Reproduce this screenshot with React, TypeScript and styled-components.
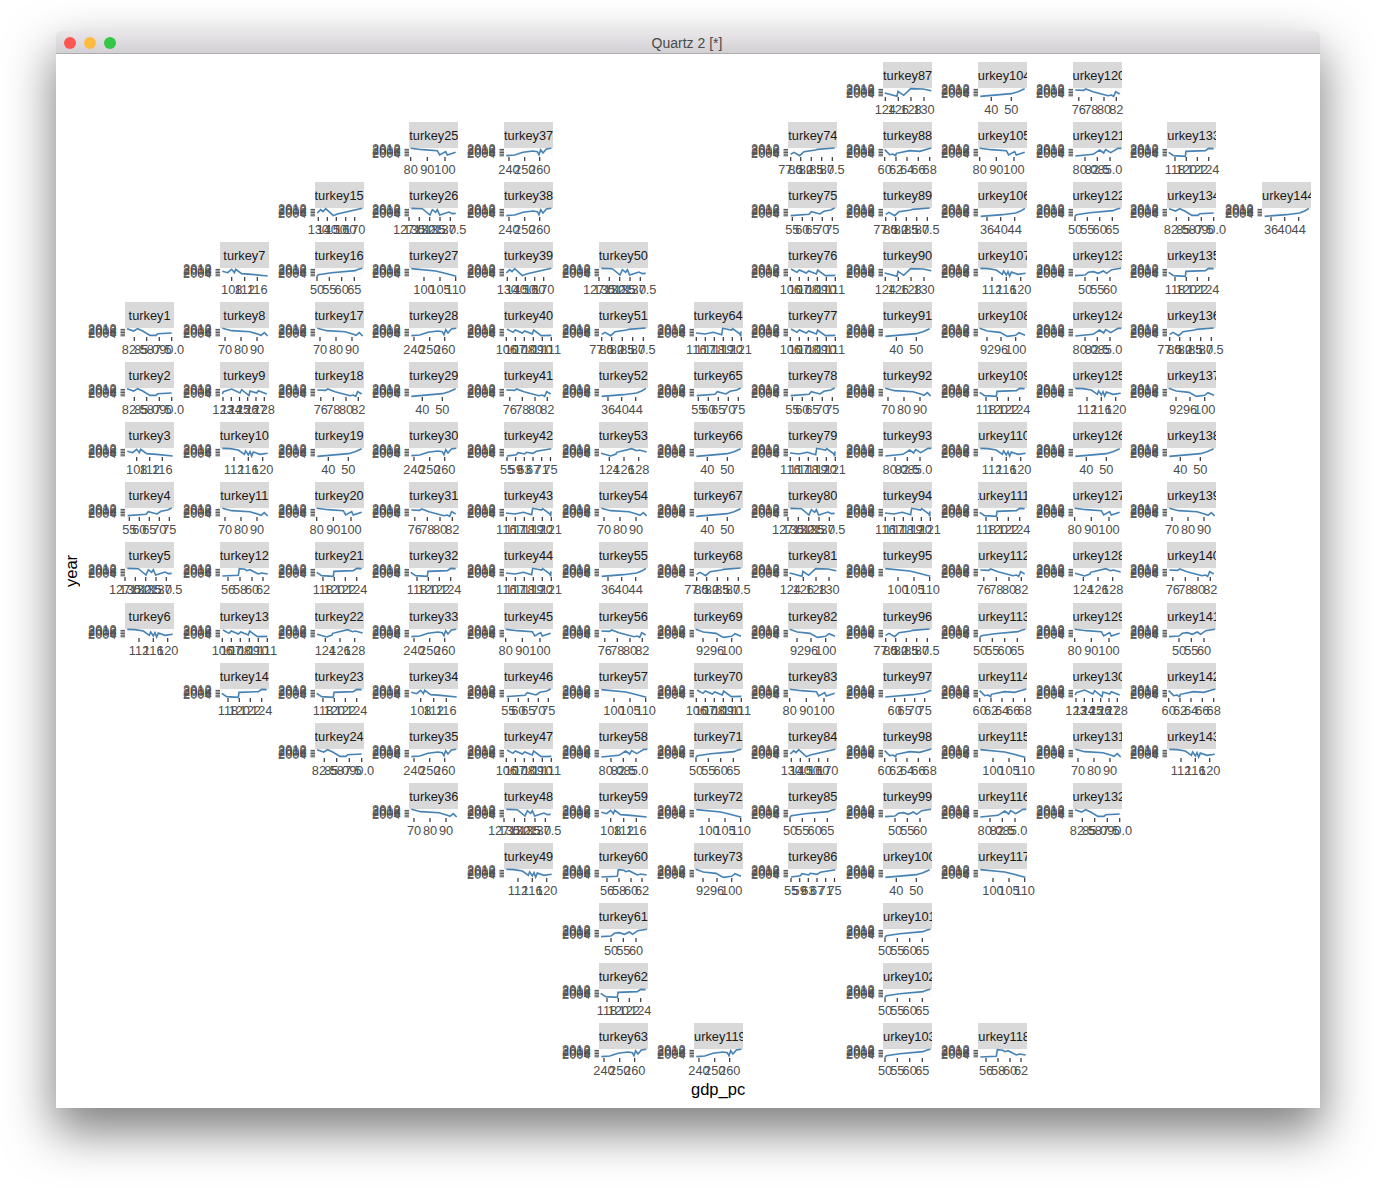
import React from "react";
import styled, { createGlobalStyle } from "styled-components";

const Global = createGlobalStyle`
  html, body { margin: 0; padding: 0; background: #fff; }
  body { width: 1376px; height: 1188px; overflow: hidden; font-family: "Liberation Sans", Arial, sans-serif; }
`;

const Page = styled.div`
  width: 1376px;
  height: 1188px;
  padding: 31px 56px 80px;
  box-sizing: border-box;
`;
const Window = styled.div`
  width: 1264px;
  height: 1077px;
  display: flex;
  flex-direction: column;
  background: #fff;
  border-radius: 5px 5px 0 0;
  box-shadow: 0 22px 48px 2px rgba(0, 0, 0, 0.5);
`;
const TitleBar = styled.div`
  height: 23px;
  box-sizing: border-box;
  display: flex;
  align-items: center;
  padding: 1px 0 0 8px;
  position: relative;
  gap: 8px;
  background: linear-gradient(#e9e7e9, #d2d0d2);
  border-bottom: 1px solid #aeacae;
  border-radius: 5px 5px 0 0;
  flex: none;
`;
const Light = styled.span<{ $c: string }>`
  width: 12px;
  height: 12px;
  border-radius: 50%;
  background: ${(p) => p.$c};
  flex: none;
`;
const WindowTitle = styled.span`
  position: absolute;
  left: 0;
  right: 2px;
  text-align: center;
  font-size: 14px;
  color: #4a4a4a;
`;
const Canvas = styled.div`
  display: flex;
  align-items: flex-start;
  padding-top: 8.12px;
  flex: 1;
`;
const YTitle = styled.div`
  writing-mode: vertical-rl;
  transform: rotate(180deg);
  font-size: 16.5px;
  line-height: 17px;
  color: #000;
  width: 17px;
  margin-left: 7px;
  height: 1017px;
  text-align: center;
`;
const PlotColumn = styled.div`
  margin-left: 45.1px;
  display: flex;
  flex-direction: column;
`;
const FacetGrid = styled.div`
  display: grid;
  grid-template-columns: repeat(13, 94.75px);
  grid-template-rows: repeat(16, 60.06px) 56.88px;
`;
const XTitle = styled.div`
  font-size: 16.5px;
  line-height: 19px;
  color: #000;
  text-align: center;
  width: 1186px;
`;
const Facet = styled.div<{ $col: number; $row: number }>`
  grid-column: ${(p) => p.$col + 1};
  grid-row: ${(p) => p.$row + 1};
  width: 49px;
`;
const Strip = styled.div`
  height: 26px;
  box-sizing: border-box;
  background: #d9d9d9;
  color: #1a1a1a;
  font-size: 12.8px;
  display: flex;
  align-items: center;
  justify-content: center;
  overflow: hidden;
  white-space: nowrap;
  padding-top: 1px;
`;
const Chart = styled.svg`
  display: block;
  overflow: visible;
`;
const AxisText = styled.text`
  font-family: "Liberation Sans", Arial, sans-serif;
  font-size: 12.8px;
  fill: #4d4d4d;
`;
const YearText = styled(AxisText)`
  fill-opacity: 0.85;
`;

type Kind = { t: [number, string][]; l: string };
const K: Record<string, Kind> = {
  k82: { t: [[9.3, "82.5"], [21.7, "85.0"], [34.3, "87.5"], [46.7, "90.0"]], l: "6,2 26,9 38,2 53,9 75,22 93,22 98,17 140,15" },
  k108: { t: [[11.7, "108"], [24.7, "112"], [37.3, "116"]], l: "7,10 23,14 35,4 43,14 47,4 65,17 95,19 143,24" },
  k50: { t: [[2, "50"], [14.3, "55"], [26.7, "60"], [39.3, "65"]], l: "5,26 10,20 50,14 120,8 130,4 142,1" },
  k70: { t: [[5, "70"], [21, "80"], [37, "90"]], l: "7,1 35,8 90,11 115,19 123,22 133,14 143,24" },
  k123: { t: [[3, "123"], [11.3, "124"], [19.5, "125"], [27.7, "126"], [36, "127"], [44.3, "128"]], l: "7,18 10,11 35,3 60,15 65,5 87,23 90,9 110,15 115,8 140,18" },
  k76: { t: [[5.8, "76"], [18.3, "78"], [31, "80"], [43.3, "82"]], l: "7,6 32,7 38,3 60,11 105,23 115,21 122,25 128,11 140,18" },
  k112: { t: [[14, "112"], [28.3, "116"], [42.7, "120"]], l: "7,1 30,2 55,6 73,19 77,9 85,21 90,11 95,24 100,12 120,19 143,16" },
  k40: { t: [[13.3, "40"], [33.3, "50"]], l: "7,25 100,17 120,11 140,2" },
  k55: { t: [[4.3, "55"], [14.3, "60"], [24.3, "65"], [34.3, "70"], [44.3, "75"]], l: "8,23 63,19 70,11 96,18 108,10 128,6 140,0" },
  k80: { t: [[1.7, "80"], [18.3, "90"], [36, "100"]], l: "5,1 40,5 85,8 92,21 110,11 115,21 140,13" },
  k127: { t: [[0, "127.5"], [10.3, "130.0"], [20.7, "132.5"], [31, "135.0"], [41.3, "137.5"]], l: "7,1 40,2 63,21 70,5 80,13 85,5 92,21 120,12 130,17 140,16" },
  k56: { t: [[8, "56"], [20, "58"], [32, "60"], [43, "62"]], l: "7,24 55,22 58,2 75,4 80,8 90,5 115,18 125,15 143,18" },
  k118: { t: [[8, "118"], [19.3, "120"], [30.3, "122"], [41.7, "124"]], l: "5,13 20,23 55,25 57,10 115,8 125,1 140,2" },
  k124: { t: [[10.3, "124"], [25, "126"], [39.7, "128"]], l: "6,16 35,24 51,18 53,13 98,2 113,8 121,6 143,12" },
  k240: { t: [[5, "240"], [20.7, "250"], [35.7, "260"]], l: "7,23 32,21 57,13 87,9 100,11 105,20 110,5 117,15 127,3 142,1" },
  k100: { t: [[15, "100"], [31, "105"], [46.7, "110"]], l: "7,2 80,9 105,15 142,25" },
  k130: { t: [[3.3, "130"], [12.3, "140"], [21.3, "150"], [30.7, "160"], [39.7, "170"]], l: "7,15 17,5 24,11 32,2 55,23 67,18 142,1" },
  k77: { t: [[2.7, "77.5"], [12.7, "80.0"], [23.3, "82.5"], [33.7, "85.0"], [44.3, "87.5"]], l: "8,19 18,13 35,23 48,11 83,6 88,4 140,0" },
  k106: { t: [[2.3, "106"], [11.3, "107"], [20.3, "108"], [29.3, "109"], [38.3, "110"], [47.3, "111"]], l: "9,3 27,13 34,6 55,15 62,9 85,18 89,6 112,23 142,22" },
  k116: { t: [[2.3, "116"], [11.3, "117"], [20.3, "118"], [29.3, "119"], [38.3, "120"], [47.3, "121"]], l: "6,15 33,18 58,13 83,20 86,1 113,6 116,2 138,18 140,25 141,10" },
  k36: { t: [[9, "36"], [22.7, "40"], [36.7, "44"]], l: "8,25 73,20 113,15 128,9 141,1" },
  k92: { t: [[9, "92"], [23, "96"], [37.7, "100"]], l: "5,1 28,9 66,13 88,25 113,22 123,14 141,22" },
  k124b: { t: [[2.3, "124"], [15.3, "126"], [28, "128"], [41, "130"]], l: "5,15 42,25 45,10 62,22 83,2 120,3 145,8" },
  k60: { t: [[1.7, "60"], [13, "62"], [24, "64"], [35.3, "66"], [46.7, "68"]], l: "5,5 20,20 30,18 38,23 40,16 80,8 110,10 145,0" },
  k8085: { t: [[12, "80.0"], [24.3, "82.5"], [37, "85.0"]], l: "7,24 60,19 80,6 92,15 98,5 113,14 135,1 145,1" },
  k5060: { t: [[12, "50"], [24.3, "55"], [37, "60"]], l: "6,23 36,21 46,13 61,11 76,16 91,9 101,16 116,5 144,1" },
  k5x: { t: [[3, "55"], [11.7, "59"], [20.3, "63"], [29, "67"], [37.7, "71"], [46.5, "75"]], l: "9,24 37,20 42,14 62,18 67,13 87,16 97,10 142,2" },
  k6075: { t: [[11.7, "60"], [21.7, "65"], [31.7, "70"], [41.7, "75"]], l: "7,24 90,17 125,12 145,4" },
};

const COLS: { start: number; row: number; kinds: string[] }[] = [
  { start: 1, row: 4, kinds: ["k82","k82","k108","k55","k127","k112"] },
  { start: 7, row: 3, kinds: ["k108","k70","k123","k112","k70","k56","k106","k118"] },
  { start: 15, row: 2, kinds: ["k130","k50","k70","k76","k40","k80","k118","k124","k118","k82"] },
  { start: 25, row: 1, kinds: ["k80","k127","k100","k240","k40","k240","k76","k118","k240","k108","k240","k70"] },
  { start: 37, row: 1, kinds: ["k240","k240","k130","k106","k76","k5x","k116","k116","k80","k55","k106","k127","k112"] },
  { start: 50, row: 3, kinds: ["k127","k77","k36","k124","k70","k36","k76","k100","k8085","k108","k56","k5060","k118","k240"] },
  { start: 64, row: 4, kinds: ["k116","k55","k40","k40","k77","k92","k106","k50","k100","k92"] },
  { start: 74, row: 1, kinds: ["k77","k55","k106","k106","k55","k116","k127","k124b","k92","k80","k130","k50","k5x"] },
  { start: 87, row: 0, kinds: ["k124b","k60","k77","k124b","k40","k70","k8085","k116","k100","k77","k6075","k60","k5060","k40","k50","k50","k50"] },
  { start: 104, row: 0, kinds: ["k40","k80","k36","k112","k92","k118","k112","k118","k76","k50","k60","k100","k8085","k100"] },
  { start: 120, row: 0, kinds: ["k76","k8085","k50","k5060","k8085","k112","k40","k80","k124","k80","k123","k70","k82"] },
  { start: 133, row: 1, kinds: ["k118","k82","k118","k77","k92","k40","k70","k76","k5060","k60","k112"] },
  { start: 144, row: 2, kinds: ["k36"] },
];

type Cell = { id: number; col: number; row: number; kind: string };
const cells: Cell[] = [];
COLS.forEach((c, col) => c.kinds.forEach((kind, i) => cells.push({ id: c.start + i, col, row: c.row + i, kind })));
cells.push({ id: 119, col: 6, row: 16, kind: "k240" });
cells.push({ id: 118, col: 9, row: 16, kind: "k56" });

const YEARS = ["2004", "2006", "2008", "2010", "2012"];
const scaled = (l: string) =>
  l.split(" ").map((p) => p.split(",").map((n) => (Number(n) / 3).toFixed(2)).join(",")).join(" ");

function Panel({ cell }: { cell: Cell }) {
  const kind = K[cell.kind];
  return (
    <Facet $col={cell.col} $row={cell.row}>
      <Strip>{`turkey${cell.id}`}</Strip>
      <Chart width={49} height={30} viewBox="0 0 49 30">
        <rect x={0} y={0} width={49} height={9} fill="#fbfbfb" />
        {YEARS.map((y, i) => (
          <React.Fragment key={y}>
            <YearText x={-8.5} y={9.8 - i * 1.2} textAnchor="end">{y}</YearText>
            <line x1={-4.5} x2={0} y1={7.8 - i * 1.6} y2={7.8 - i * 1.6} stroke="#333" strokeWidth={0.9} />
          </React.Fragment>
        ))}
        {kind.t.map(([x, label]) => (
          <React.Fragment key={label}>
            <line x1={x} x2={x} y1={9} y2={13} stroke="#333" strokeWidth={1.2} />
            <AxisText x={x} y={25.8} textAnchor="middle">{label}</AxisText>
          </React.Fragment>
        ))}
        <polyline points={scaled(kind.l)} fill="none" stroke="#4682b4" strokeWidth={1.6} />
      </Chart>
    </Facet>
  );
}

export default function App() {
  return (
    <Page>
      <Global />
      <Window>
        <TitleBar>
          <Light $c="#fc5753" />
          <Light $c="#fdbc40" />
          <Light $c="#33c748" />
          <WindowTitle>Quartz 2 [*]</WindowTitle>
        </TitleBar>
        <Canvas>
          <YTitle>year</YTitle>
          <PlotColumn>
            <FacetGrid>
              {cells.map((c) => (
                <Panel key={c.id} cell={c} />
              ))}
            </FacetGrid>
            <XTitle>gdp_pc</XTitle>
          </PlotColumn>
        </Canvas>
      </Window>
    </Page>
  );
}
